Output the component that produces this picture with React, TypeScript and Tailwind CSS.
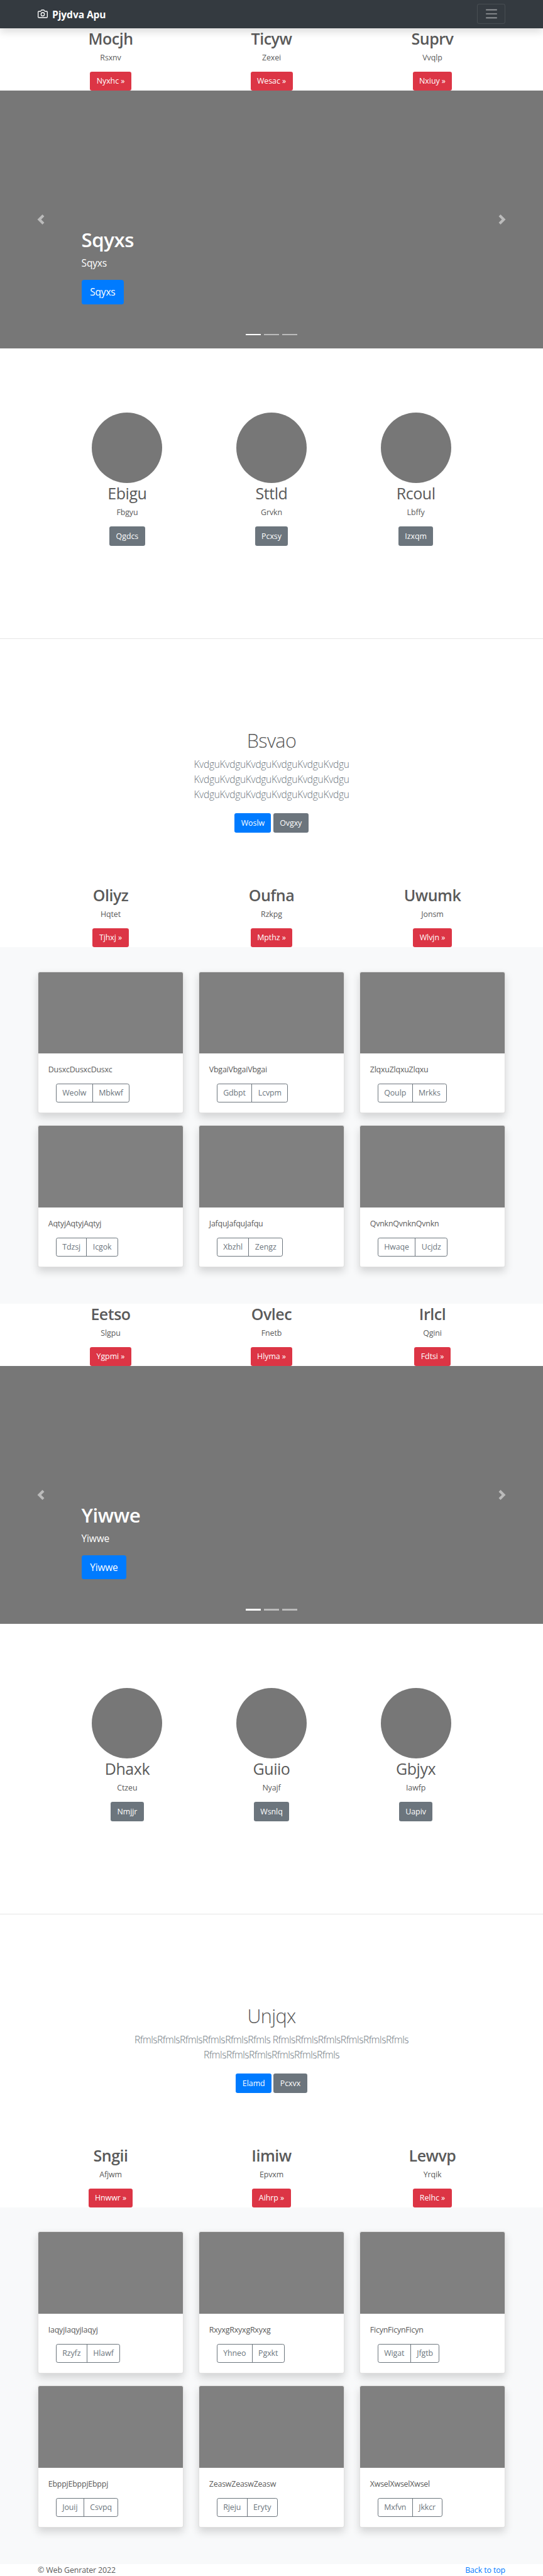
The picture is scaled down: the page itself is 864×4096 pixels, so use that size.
import React from "react";

type Triple = [string, string, string];

const TITLE = "text-[25px] leading-[32px] mb-[5.12px]";
const NOTE = "mb-[11.8px] text-[12.4px] leading-[20.2px] tracking-[-0.1px]";
const BTN =
  "inline-flex h-[30.4px] items-center justify-center rounded-[3.2px] px-[10.4px] pt-px text-[12.4px] tracking-[-0.04px] whitespace-nowrap text-white align-top";

function Navbar() {
  return (
    <header className="relative z-10 flex h-[44.8px] shrink-0 items-center justify-between bg-[#343a40] px-[60px] shadow-[0_6.4px_12.8px_rgba(0,0,0,0.15)]">
      <div className="flex items-center text-white">
        <svg className="mr-[7px] h-4 w-4" viewBox="0 0 24 24" fill="none" stroke="currentColor" strokeWidth="2" strokeLinecap="round" strokeLinejoin="round">
          <path d="M23 19a2 2 0 0 1-2 2H3a2 2 0 0 1-2-2V8a2 2 0 0 1 2-2h4l2-3h6l2 3h4a2 2 0 0 1 2 2z" />
          <circle cx="12" cy="13" r="4" />
        </svg>
        <strong className="pt-px text-[15.6px] font-bold leading-6 tracking-[-0.1px]">Pjydva Apu</strong>
      </div>
      <button className="flex h-8 w-[44.8px] items-center justify-center rounded-[3.2px] border border-white/10">
        <svg className="h-6 w-6" viewBox="0 0 30 30" stroke="rgba(255,255,255,0.5)" strokeWidth="2" strokeMiterlimit="10">
          <path d="M4 7h22M4 15h22M4 23h22" />
        </svg>
      </button>
    </header>
  );
}

function Headings({ titles, notes, links }: { titles: Triple; notes: Triple; links: Triple }) {
  return (
    <section className="grid h-[99.55px] shrink-0 grid-cols-3 px-12 text-center">
      {titles.map((t, i) => (
        <div key={t}>
          <h2 className={`${TITLE} font-semibold tracking-[-0.5px]`}>{t}</h2>
          <p className={NOTE}>{notes[i]}</p>
          <a className={`${BTN} bg-[#dc3545]`}>{links[i]} »</a>
        </div>
      ))}
    </section>
  );
}

function Carousel({ word }: { word: string }) {
  return (
    <section className="relative flex h-[409.6px] shrink-0 items-end bg-[#777] text-white">
      <div className="px-[129.6px] pb-[70.4px]">
        <h1 className="mb-[5.6px] text-[31.2px] font-semibold leading-[39.2px] tracking-[-0.45px]">{word}</h1>
        <p className="mb-[15.5px] text-[15.5px] leading-[23px] tracking-[-0.18px]">{word}</p>
        <a className="flex h-[38.4px] w-fit items-center rounded-[3.84px] bg-[#007bff] px-[13.6px] pt-px text-[15.5px] tracking-[-0.18px]">{word}</a>
      </div>
      <div className="absolute inset-y-0 left-0 flex w-[15%] items-center justify-center">
        <svg className="h-4 w-4 fill-white opacity-50" viewBox="0 0 8 8">
          <path d="M5.25 0l-4 4 4 4 1.5-1.5L4.25 4l2.5-2.5L5.25 0z" />
        </svg>
      </div>
      <div className="absolute inset-y-0 right-0 flex w-[15%] items-center justify-center">
        <svg className="h-4 w-4 fill-white opacity-50" viewBox="0 0 8 8">
          <path d="M2.75 0l-1.5 1.5L3.75 4l-2.5 2.5L2.75 8l4-4-4-4z" />
        </svg>
      </div>
      <div className="absolute inset-x-0 bottom-[21px] flex justify-center gap-[4.8px]">
        <span className="h-[2.4px] w-6 bg-white" />
        <span className="h-[2.4px] w-6 bg-white/50" />
        <span className="h-[2.4px] w-6 bg-white/50" />
      </div>
    </section>
  );
}

function Circles({ titles, notes, links }: { titles: Triple; notes: Triple; links: Triple }) {
  return (
    <section className="grid h-[462.2px] shrink-0 grid-cols-3 border-b border-black/10 px-[87.6px] pt-[102.4px] text-center">
      {titles.map((t, i) => (
        <div key={t}>
          <div className="mx-auto h-28 w-28 rounded-full bg-[#777]" />
          <h2 className={`${TITLE} font-normal tracking-[-0.44px]`}>{t}</h2>
          <p className={NOTE}>{notes[i]}</p>
          <a className={`${BTN} bg-[#6c757d]`}>{links[i]}</a>
        </div>
      ))}
    </section>
  );
}

type IntroProps = { title: string; lines: string[]; tracking: string; primary: string; secondary: string };

function Intro({ title, lines, tracking, primary, secondary }: IntroProps) {
  return (
    <section className="shrink-0 pb-[82.9px] pt-[140.6px] text-center">
      <h1 className="mb-[5.2px] text-[30.6px] font-light leading-[40.8px] tracking-[-0.65px]">{title}</h1>
      <div className={`mb-[18.6px] text-[15.5px] font-light leading-6 text-[#6c757d] ${tracking}`}>
        {lines.map((l, i) => (
          <p key={i}>{l}</p>
        ))}
      </div>
      <div className="flex justify-center gap-[3.4px]">
        <a className={`${BTN} bg-[#007bff]`}>{primary}</a>
        <a className={`${BTN} bg-[#6c757d]`}>{secondary}</a>
      </div>
    </section>
  );
}

function Album({ cards }: { cards: Triple[] }) {
  return (
    <section className="grid h-[566.6px] shrink-0 grid-cols-3 content-start gap-x-6 gap-y-[19.2px] bg-[#f8f9fa] px-[60px] pt-[38.4px]">
      {cards.map(([word, left, right]) => (
        <article key={word} className="h-[225.6px] rounded-[3.2px] border border-black/12 bg-white shadow-[0_6.4px_12.8px_rgba(0,0,0,0.15)]">
          <div className="h-[129.4px] rounded-t-[2.4px] bg-[#808080]" />
          <div className="px-[15.8px] pt-4">
            <p className="mb-[11.8px] text-[12.4px] leading-[20.2px] tracking-[-0.2px]">{word + word + word}</p>
            <div className="ml-3 flex h-[30.4px] w-fit rounded-[3.2px] border border-[#6c757d] text-[12.4px] tracking-[-0.08px] text-[#6c757d]">
              <button className="border-r border-[#6c757d] px-[9.4px] pt-px">{left}</button>
              <button className="px-[9.4px] pt-px">{right}</button>
            </div>
          </div>
        </article>
      ))}
    </section>
  );
}

export default function App() {
  return (
    <div className="flex h-[4096px] w-[864px] flex-col overflow-hidden bg-white font-['Open_Sans','Noto_Sans',sans-serif] text-[#5a5a5a]">
      <Navbar />
      <Headings titles={["Mocjh", "Ticyw", "Suprv"]} notes={["Rsxnv", "Zexei", "Vvqlp"]} links={["Nyxhc", "Wesac", "Nxiuy"]} />
      <Carousel word="Sqyxs" />
      <Circles titles={["Ebigu", "Sttld", "Rcoul"]} notes={["Fbgyu", "Grvkn", "Lbffy"]} links={["Qgdcs", "Pcxsy", "Izxqm"]} />
      <Intro
        title="Bsvao"
        lines={["KvdguKvdguKvdguKvdguKvdguKvdgu", "KvdguKvdguKvdguKvdguKvdguKvdgu", "KvdguKvdguKvdguKvdguKvdguKvdgu"]}
        tracking="tracking-[-0.27px]"
        primary="Woslw"
        secondary="Ovgxy"
      />
      <Headings titles={["Oliyz", "Oufna", "Uwumk"]} notes={["Hqtet", "Rzkpg", "Jonsm"]} links={["Tjhxj", "Mpthz", "Wlvjn"]} />
      <Album
        cards={[
          ["Dusxc", "Weolw", "Mbkwf"],
          ["Vbgai", "Gdbpt", "Lcvpm"],
          ["Zlqxu", "Qoulp", "Mrkks"],
          ["Aqtyj", "Tdzsj", "Icgok"],
          ["Jafqu", "Xbzhl", "Zengz"],
          ["Qvnkn", "Hwaqe", "Ucjdz"],
        ]}
      />
      <Headings titles={["Eetso", "Ovlec", "Irlcl"]} notes={["Slgpu", "Fnetb", "Qgini"]} links={["Ygpmi", "Hlyma", "Fdtsi"]} />
      <Carousel word="Yiwwe" />
      <Circles titles={["Dhaxk", "Guiio", "Gbjyx"]} notes={["Ctzeu", "Nyajf", "Iawfp"]} links={["Nmjjr", "Wsnlq", "Uapiv"]} />
      <Intro
        title="Unjqx"
        lines={["RfmlsRfmlsRfmlsRfmlsRfmlsRfmls RfmlsRfmlsRfmlsRfmlsRfmlsRfmls", "RfmlsRfmlsRfmlsRfmlsRfmlsRfmls"]}
        tracking="tracking-[-0.45px]"
        primary="Elamd"
        secondary="Pcxvx"
      />
      <Headings titles={["Sngii", "Iimiw", "Lewvp"]} notes={["Afjwm", "Epvxm", "Yrqik"]} links={["Hnwwr", "Aihrp", "Relhc"]} />
      <Album
        cards={[
          ["Iaqyj", "Rzyfz", "Hlawf"],
          ["Rxyxg", "Yhneo", "Pgxkt"],
          ["Ficyn", "Wigat", "Jfgtb"],
          ["Ebppj", "Jouij", "Csvpq"],
          ["Zeasw", "Rjeju", "Eryty"],
          ["Xwsel", "Mxfvn", "Jkkcr"],
        ]}
      />
      <footer className="flex justify-between px-[60px] text-[12.4px] leading-[19.2px] tracking-[-0.12px]">
        <p>© Web Genrater 2022</p>
        <a className="text-[#007bff]">Back to top</a>
      </footer>
    </div>
  );
}
